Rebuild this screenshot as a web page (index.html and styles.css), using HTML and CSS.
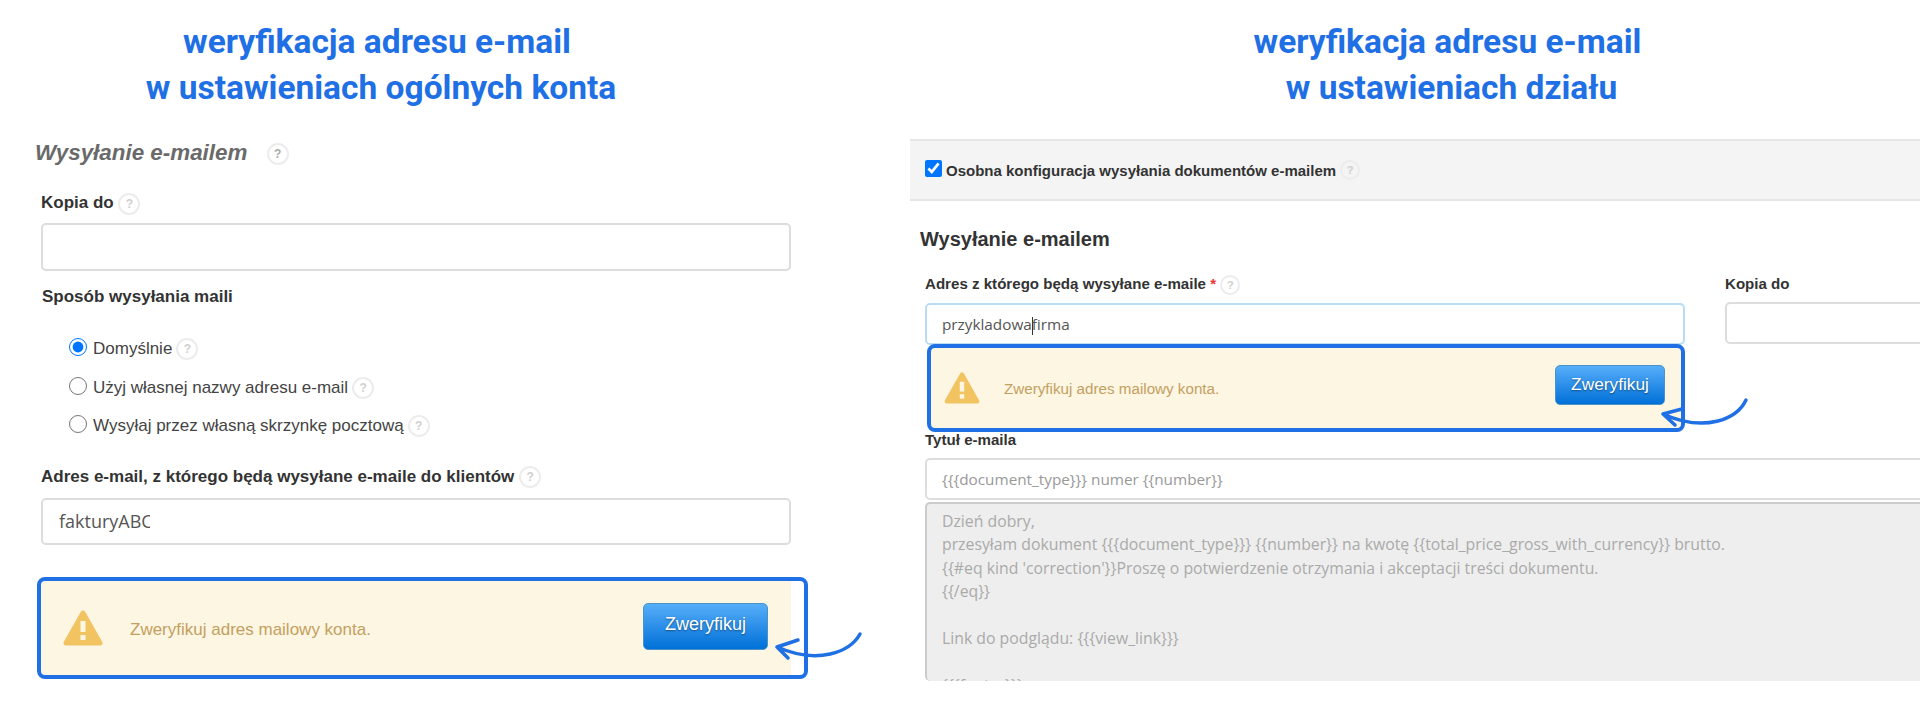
FILE: index.html
```html
<!DOCTYPE html>
<html lang="pl">
  <head>
    <meta charset="UTF-8" />
    <meta name="viewport" content="width=device-width, initial-scale=1.0" />
    <title>Weryfikacja adresu e-mail</title>
    <link rel="stylesheet" href="styles.css">
  </head>
  <body>
    <div class="page">
      <section class="panel panel-account">
        <h1 class="title"><span class="title-first">weryfikacja adresu e-mail</span>w ustawieniach ogólnych konta</h1>
        <h2 class="account-heading">Wysyłanie e-mailem <span class="help help-heading">?</span></h2>

        <label class="label label-copy">Kopia do <span class="help">?</span></label>
        <div class="field field-copy"></div>

        <div class="label label-method">Sposób wysyłania maili</div>
        <div class="radio-list">
          <label class="radio-row"><input type="radio" name="method" checked /> Domyślnie <span class="help">?</span></label>
          <label class="radio-row"><input type="radio" name="method" /> Użyj własnej nazwy adresu e-mail <span class="help">?</span></label>
          <label class="radio-row"><input type="radio" name="method" /> Wysyłaj przez własną skrzynkę pocztową <span class="help">?</span></label>
        </div>

        <label class="label label-address">Adres e-mail, z którego będą wysyłane e-maile do klientów <span class="help">?</span></label>
        <div class="field field-address"><span class="typed">fakturyABC</span></div>

        <div class="alert alert-account">
          <svg class="alert-icon" viewBox="0 0 40 36">
            <path d="M20 3 L37 33 H3 Z" fill="#f2c461" stroke="#f2c461" stroke-width="5" stroke-linejoin="round" />
            <rect x="17.5" y="11" width="5" height="11" fill="#fcf6e3" />
            <rect x="17.5" y="25" width="5" height="5" fill="#fcf6e3" />
          </svg>
          <span class="alert-text">Zweryfikuj adres mailowy konta.</span>
          <button class="verify">Zweryfikuj</button>
          <div class="frame"></div>
          <svg class="arrow" viewBox="0 0 100 40">
            <path d="M92 4 C82 22 50 35 9 17 M30 10 L9 17 L20 28" fill="none" stroke="#1f6fe5" stroke-width="3.5" stroke-linecap="round" stroke-linejoin="round" />
          </svg>
        </div>
      </section>

      <section class="panel panel-dept">
        <h1 class="title"><span class="title-first">weryfikacja adresu e-mail</span>w ustawieniach działu</h1>
        <div class="config-bar">
          <label class="config-label"><input type="checkbox" checked /> Osobna konfiguracja wysyłania dokumentów e-mailem <span class="help help-small">?</span></label>
        </div>
        <h2 class="dept-heading">Wysyłanie e-mailem</h2>

        <div class="dept-columns">
          <div>
            <label class="dept-label">Adres z którego będą wysyłane e-maile <span class="required">*</span> <span class="help help-small">?</span></label>
            <div class="dept-field dept-field-focus">przykladowa<span class="caret"></span>firma</div>
          </div>
          <div>
            <label class="dept-label">Kopia do</label>
            <div class="dept-field"></div>
          </div>
        </div>

        <div class="alert alert-dept">
          <svg class="alert-icon" viewBox="0 0 40 36">
            <path d="M20 3 L37 33 H3 Z" fill="#f2c461" stroke="#f2c461" stroke-width="5" stroke-linejoin="round" />
            <rect x="17.5" y="11" width="5" height="11" fill="#fcf6e3" />
            <rect x="17.5" y="25" width="5" height="5" fill="#fcf6e3" />
          </svg>
          <span class="alert-text">Zweryfikuj adres mailowy konta.</span>
          <button class="verify">Zweryfikuj</button>
          <div class="frame"></div>
          <svg class="arrow" viewBox="0 0 100 40">
            <path d="M91 3 C82 22 50 36 8 17 M27 12 L8 17 L20 28" fill="none" stroke="#1f6fe5" stroke-width="3.5" stroke-linecap="round" stroke-linejoin="round" />
          </svg>
        </div>

        <label class="dept-label dept-label-subject">Tytuł e-maila</label>
        <div class="dept-field dept-field-wide">{{{document_type}}} numer {{number}}</div>
        <div class="message">Dzień dobry,
przesyłam dokument {{{document_type}}} {{number}} na kwotę {{total_price_gross_with_currency}} brutto.
{{#eq kind 'correction'}}Proszę o potwierdzenie otrzymania i akceptacji treści dokumentu.
{{/eq}}

Link do podglądu: {{{view_link}}}

{{{footer}}}</div>
      </section>
    </div>
  </body>
</html>
```

FILE: styles.css
```css
* {
  box-sizing: border-box;
}
body {
  margin: 0;
  background-color: #fff;
  font-family: "Liberation Sans", Arial, sans-serif;
  color: #333;
}
.page {
  display: flex;
  width: 1920px;
  height: 720px;
  overflow: hidden;
}
.panel {
  flex: none;
  padding-top: 19px;
}
.panel-account {
  width: 910px;
  padding-left: 41px;
}
.panel-dept {
  width: 1010px;
}
.title {
  margin: 0;
  font-family: Roboto, sans-serif;
  font-size: 33.5px;
  font-weight: 700;
  line-height: 46px;
  color: #1f6fe5;
  text-align: center;
}
.title-first {
  display: block;
  padding-right: 8px;
}
.panel-account .title {
  width: 680px;
}
.panel-dept .title {
  width: 1083px;
}

/* help bubble */
.help {
  display: inline-flex;
  justify-content: center;
  align-items: center;
  width: 22px;
  height: 22px;
  border: 2px solid #ececec;
  border-radius: 50%;
  font-size: 12px;
  font-style: normal;
  font-weight: 700;
  color: #cfcfcf;
  vertical-align: middle;
}
.help-small {
  width: 20px;
  height: 20px;
  font-size: 11px;
}
.help-heading {
  margin-left: 13px;
  color: #aaa;
}

/* left panel */
.account-heading {
  margin: 28px 0 0 -6px;
  font-size: 22.4px;
  font-style: italic;
  font-weight: 700;
  line-height: 28px;
  color: #6a6a6a;
}
.label {
  display: block;
  font-size: 17px;
  font-weight: 700;
  line-height: 24px;
}
.label-copy {
  margin-top: 24px;
}
.label-method {
  margin-top: 14px;
  margin-left: 1px;
}
.label-address {
  margin-top: 19px;
}
.field {
  width: 750px;
  padding: 0 16px;
  background-color: #fff;
  border: 2px solid #ddd;
  border-radius: 5px;
  font-family: "Open Sans", sans-serif;
  font-size: 18px;
  color: #555;
}
.field-copy {
  height: 48px;
  margin-top: 8px;
}
.field-address {
  display: flex;
  align-items: center;
  height: 47px;
  margin-top: 9px;
}
.typed {
  width: 91px;
  overflow: hidden;
  white-space: nowrap;
}
.radio-list {
  margin: 21px 0 0 28px;
}
.radio-row {
  display: flex;
  align-items: center;
  gap: 4px;
  height: 38.5px;
  font-size: 17px;
  color: #444;
}
.radio-row input {
  width: 18px;
  height: 18px;
  margin: 0 2px 4px 0;
}

/* alert with the blue highlight */
.alert {
  position: relative;
  display: flex;
  align-items: center;
  background-color: #fcf6e3;
  color: #c4a060;
}
.alert-account {
  width: 750px;
  height: 94px;
  margin-top: 36px;
  padding: 0 23px 0 22px;
  font-size: 17px;
}
.alert-dept {
  width: 750px;
  height: 80px;
  margin: 3px 0 0 21px;
  padding: 0 16px 0 13px;
  font-size: 15.2px;
}
.alert-icon {
  flex: none;
}
.alert-account .alert-icon {
  width: 40px;
  height: 36px;
}
.alert-dept .alert-icon {
  width: 36px;
  height: 32px;
}
.alert-text {
  flex: 1;
}
.alert-account .alert-text {
  margin: 5px 0 0 27px;
}
.alert-dept .alert-text {
  margin: 0 0 0 24px;
}
.verify {
  flex: none;
  background: linear-gradient(#57aef9, #0070d8);
  border: 1px solid #4a93c9;
  border-radius: 5px;
  color: #fff;
  font-family: "Liberation Sans", Arial, sans-serif;
  text-shadow: 0 1px 2px rgba(0, 0, 0, 0.45);
}
.alert-account .verify {
  width: 125px;
  height: 47px;
  margin-top: -2px;
  padding: 0 0 4px;
  font-size: 18px;
}
.alert-dept .verify {
  width: 110px;
  height: 40px;
  margin-top: -7px;
  font-size: 17.3px;
}
.frame {
  position: absolute;
  top: -4px;
  bottom: -4px;
  left: -4px;
  right: -4px;
  border: 4px solid #1f6fe5;
  border-radius: 8px;
}
.alert-account .frame {
  right: -17px;
}
.arrow {
  position: absolute;
  width: 100px;
  height: 40px;
}
.alert-account .arrow {
  left: 727px;
  top: 49px;
}
.alert-dept .arrow {
  left: 724px;
  top: 49px;
}

/* right panel */
.config-bar {
  display: flex;
  align-items: center;
  height: 62px;
  margin-top: 28px;
  padding-left: 15px;
  background-color: #f4f4f4;
  border-top: 2px solid #e6e6e6;
  border-bottom: 2px solid #e6e6e6;
}
.config-label {
  display: flex;
  align-items: center;
  gap: 4px;
  font-size: 15px;
  font-weight: 700;
}
.config-label input {
  width: 17px;
  height: 17px;
  margin: 0 0 3px;
}
.dept-heading {
  margin: 24px 0 0 10px;
  font-size: 20px;
  font-weight: 700;
  line-height: 28px;
}
.dept-columns {
  display: grid;
  grid-template-columns: 760px 760px;
  gap: 40px;
  margin-top: 21px;
  padding-left: 15px;
}
.dept-label {
  display: block;
  font-size: 15.1px;
  font-weight: 700;
  line-height: 20px;
}
.required {
  color: #e33;
}
.dept-field {
  height: 42px;
  margin-top: 8px;
  padding: 0 15px;
  background-color: #fff;
  border: 2px solid #ddd;
  border-radius: 5px;
  font-family: "Open Sans", sans-serif;
  font-size: 15.3px;
  line-height: 38px;
  color: #555;
}
.dept-field-focus {
  border-color: #b9dcf5;
}
.caret {
  display: inline-block;
  width: 1px;
  height: 18px;
  margin-right: -1px;
  background-color: #333;
  vertical-align: middle;
}
.dept-label-subject {
  margin: 2px 0 0 15px;
}
.dept-field-wide {
  width: 1000px;
  margin-left: 15px;
  color: #999;
}
.message {
  width: 1000px;
  height: 179px;
  margin: 2px 0 0 15px;
  padding: 6px 15px 0;
  overflow: hidden;
  background-color: #eee;
  border-top: 2px solid #ccc;
  border-left: 2px solid #ccc;
  border-radius: 5px 0 0 5px;
  font-family: "Open Sans", sans-serif;
  font-size: 15.8px;
  line-height: 23.4px;
  color: #aaa;
  white-space: pre;
}
```
